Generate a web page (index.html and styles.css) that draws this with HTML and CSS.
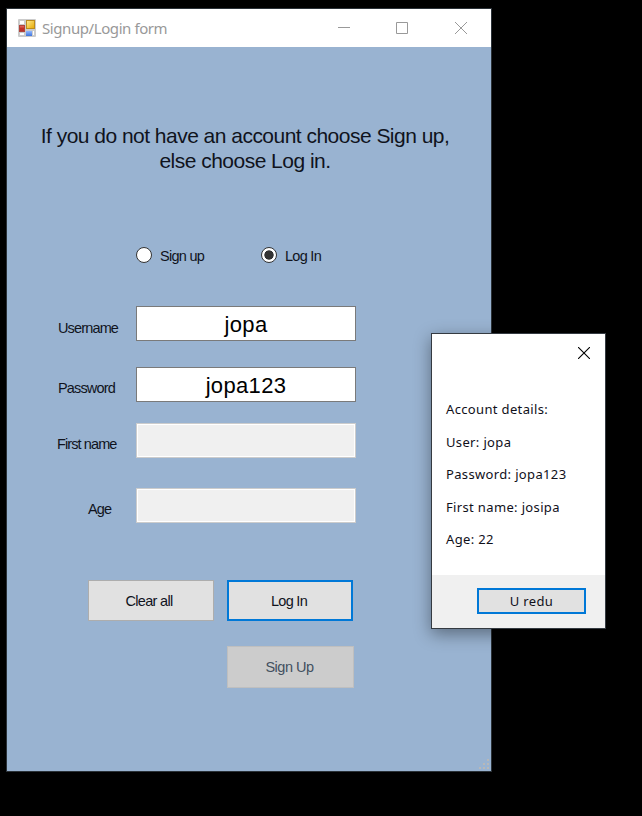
FILE: index.html
```html
<!DOCTYPE html>
<html lang="en">
<head>
<meta charset="utf-8">
<title>Signup/Login form</title>
<link rel="stylesheet" href="styles.css">
</head>
<body>
<main class="window">
  <header class="titlebar">
    <svg class="app-icon" width="18" height="18" viewBox="0 0 18 18">
      <defs>
        <linearGradient id="gold" x2="1" y2="1"><stop stop-color="#ffeb93"/><stop offset="1" stop-color="#e6a900"/></linearGradient>
        <linearGradient id="red" x2="0" y2="1"><stop stop-color="#e87567"/><stop offset=".5" stop-color="#c62f26"/><stop offset="1" stop-color="#b3352c"/></linearGradient>
        <linearGradient id="blue" x2="0" y2="1"><stop stop-color="#91b8ff"/><stop offset="1" stop-color="#3f74dc"/></linearGradient>
      </defs>
      <rect width="18" height="18" rx="1" fill="#cbcbcb"/>
      <path d="M2 2h4v3H2zM2 14h4v2H2zM15 12h1v4h-1z" fill="#fff"/>
      <rect x="1.500" y="6.500" width="5" height="6" fill="url(#red)" stroke="#b0443b"/>
      <rect x="8.500" y="1.500" width="8" height="8" fill="url(#gold)" stroke="#bd8c1c"/>
      <rect x="8" y="12" width="6" height="5" fill="url(#blue)"/>
    </svg>
    <h1 class="title">Signup/Login form</h1>
    <svg class="controls" width="132" height="14" viewBox="0 0 132 14" fill="none" stroke="#999">
      <path d="M1 6.500h12M59.500 1.500h11v11h-11z"/>
      <path d="M118 1l12 12M130 1l-12 12"/>
    </svg>
  </header>
  <form class="form">
    <p class="intro">If you do not have an account choose Sign up,<br>else choose Log in.</p>
    <div class="modes">
      <span class="mode"><i class="radio"></i>Sign up</span>
      <span class="mode"><i class="radio checked"></i>Log In</span>
    </div>
    <div class="fields">
      <span class="label username">Username</span><div class="box">jopa</div>
      <span class="label password">Password</span><div class="box">jopa123</div>
      <span class="label firstname">First name</span><div class="box disabled"></div>
      <span class="label age">Age</span><div class="box disabled"></div>
    </div>
    <div class="actions">
      <div class="button">Clear all</div>
      <div class="button primary">Log In</div>
      <div class="button inactive">Sign Up</div>
    </div>
  </form>
  <svg class="grip" width="10" height="10" viewBox="0 0 10 10" fill="#b8b8b8">
    <path d="M8 0h2v2H8zM4 4h2v2H4zM8 4h2v2H8zM0 8h2v2H0zM4 8h2v2H4zM8 8h2v2H8z"/>
  </svg>
</main>
<section class="dialog">
  <svg class="close" width="12" height="12" viewBox="0 0 12 12" fill="none" stroke="#000" stroke-width="1.100"><path d="M0 0l12 12M12 0L0 12"/></svg>
  <div class="details">
    <p>Account details:</p>
    <p>User: jopa</p>
    <p>Password: jopa123</p>
    <p>First name: josipa</p>
    <p>Age: 22</p>
  </div>
  <footer class="dialog-footer"><div class="confirm">U redu</div></footer>
</section>
</body>
</html>
```

FILE: styles.css
```css
* { box-sizing: border-box; }
body { margin: 0; width: 642px; height: 816px; overflow: hidden; background: #000; padding: 8px 0 0 6px; }
p, h1 { margin: 0; }
svg { display: block; }

.window { position: relative; width: 486px; height: 764px; border: 1px solid #2b3238; background: #99b3d1; font-family: "Liberation Sans", Arial, sans-serif; }
.titlebar { display: flex; align-items: center; height: 38px; padding: 0 22px 0 11px; background: #fff; }
.title { margin: -1px 0 0 6px; font: 15px "Noto Sans", sans-serif; color: #999; letter-spacing: -0.420px; }
.controls { margin-left: auto; }

.form { padding-top: 76px; color: #10131d; }
.intro { padding-right: 8px; text-align: center; font-size: 21px; line-height: 25px; letter-spacing: -0.520px; white-space: nowrap; }

.modes { display: flex; margin: 74px 0 0 129px; font-size: 14.500px; line-height: 18px; letter-spacing: -0.720px; }
.mode { display: flex; gap: 8px; width: 125px; height: 17px; }
.radio { width: 16px; height: 16px; border: 1px solid #333; border-radius: 50%; background: #fff; }
.radio.checked { background: radial-gradient(circle, #333 4.300px, #fff 5px); }

.fields { display: grid; grid-template-columns: 129px 220px; grid-template-rows: 61px 56px 65px 35px; margin-top: 42px; }
.label { padding-top: 14px; font-size: 14.500px; line-height: 17px; letter-spacing: -0.850px; }
.username { padding-left: 51px; }
.password { padding: 13px 0 0 51px; }
.firstname { padding: 13px 0 0 50px; letter-spacing: -0.900px; }
.age { padding: 13px 0 0 81px; }
.box { height: 35px; border: 1px solid #7a7a7a; background: #fff; color: #000; font-size: 22px; line-height: 36px; text-align: center; letter-spacing: 0.350px; }
.box.disabled { border-color: #ccc; background: #f0f0f0; box-shadow: inset 0 0 0 1px #fff; }

.actions { display: grid; grid-template-columns: 126px 127px; grid-template-rows: 41px 42px; gap: 25px 13px; margin: 57px 0 0 81px; }
.button { display: flex; align-items: center; justify-content: center; border: 1px solid #adadad; background: #e1e1e1; font-size: 14.500px; letter-spacing: -0.700px; padding-right: 4px; }
.button.primary { width: 126px; border: 2px solid #0078d7; padding-right: 2px; }
.button.inactive { grid-column: 2; border-color: #bfbfbf; background: #ccc; color: #42505f; letter-spacing: -0.500px; padding-right: 2px; }
.grip { position: absolute; right: 2px; bottom: 2px; }

.dialog { position: absolute; left: 431px; top: 333px; width: 175px; height: 296px; border: 1px solid #343a41; background: #fff; box-shadow: 0 5px 16px rgba(0, 0, 0, .4); font: 13px "Noto Sans", sans-serif; color: #10101a; letter-spacing: 0.350px; display: flex; flex-direction: column; }
.close { margin: 13px 0 0 146px; }
.details { padding: 34px 0 0 14px; line-height: 32.500px; }
.dialog-footer { display: flex; height: 53px; margin-top: auto; padding: 13px 0 0 45px; background: #f0f0f0; }
.confirm { width: 109px; height: 26px; border: 2px solid #0078d7; background: #e1e1e1; text-align: center; line-height: 23px; }
```
